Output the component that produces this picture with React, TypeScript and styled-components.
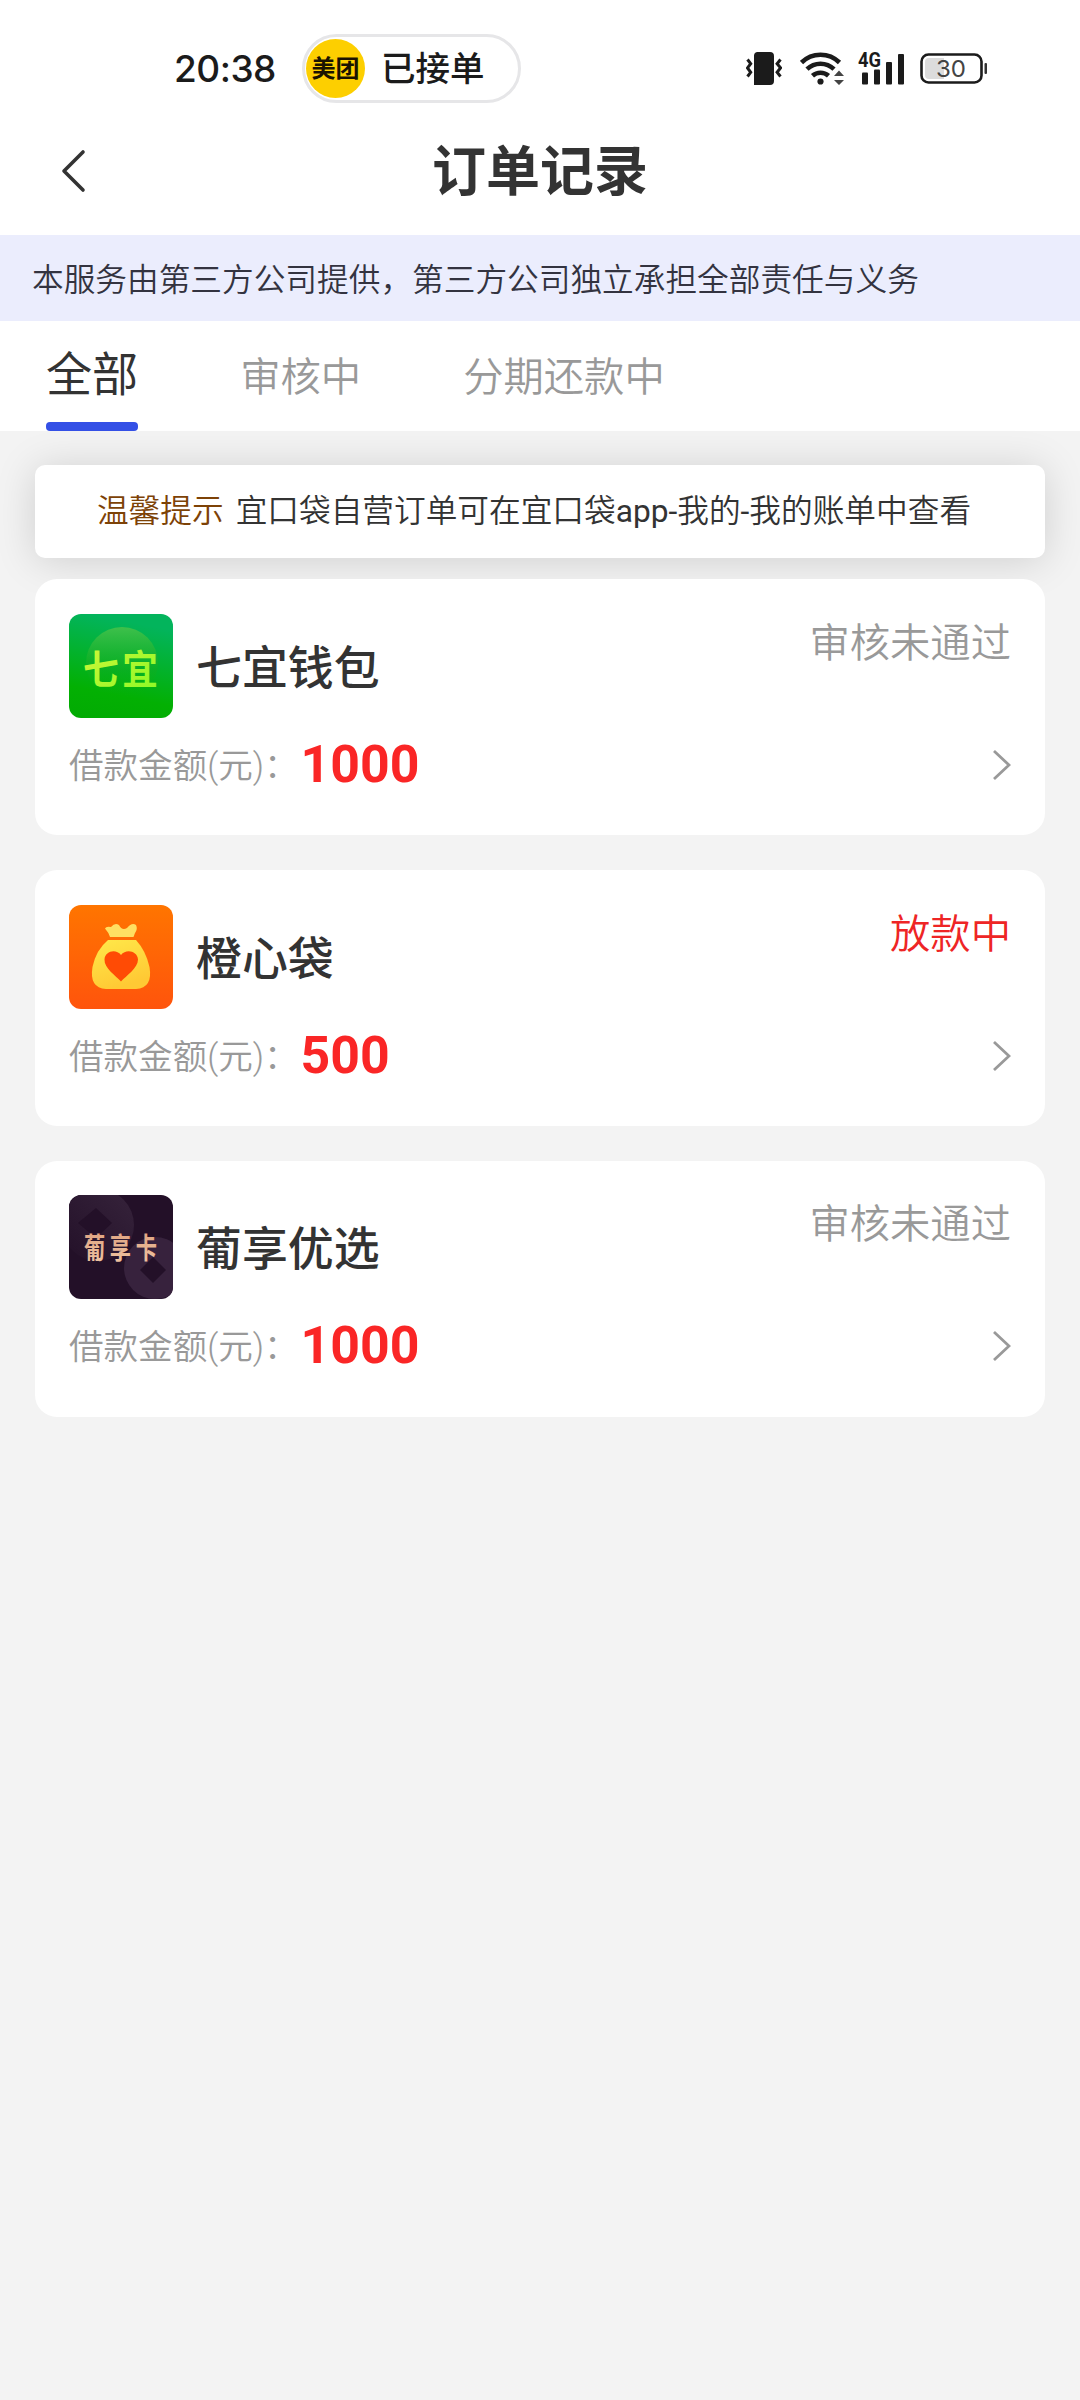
import React from "react";
import styled, { createGlobalStyle } from "styled-components";

const GlobalStyle = createGlobalStyle`
  * { box-sizing: border-box; }
  body {
    margin: 0;
    background: #f3f3f3;
    font-family: Roboto, "Noto Sans CJK SC", sans-serif;
    font-weight: 350;
    color: #333;
  }
`;

const Page = styled.div`
  width: 1080px;
  min-height: 2400px;
  background: #f3f3f3;
  white-space: nowrap;
`;

const StatusBar = styled.div`
  display: flex;
  align-items: center;
  justify-content: space-between;
  height: 137px;
  padding: 0 92px 0 174px;
  background: #fff;
`;

const StatusGroup = styled.div`
  display: flex;
  align-items: center;
`;

const Clock = styled.span`
  width: 128px;
  font: 500 37px/44px Inter, sans-serif;
  letter-spacing: -0.5px;
  color: #1b1b1b;
`;

const Pill = styled.div`
  display: flex;
  align-items: center;
  gap: 16px;
  width: 219px;
  height: 69px;
  padding-left: 1px;
  border: 3px solid #e6e6e8;
  border-radius: 35px;
  background: #fff;
`;

const PillText = styled.span`
  padding-top: 1px;
  font-size: 34.5px;
  line-height: 50px;
  font-weight: 500;
  color: #1b1b1b;
`;

const Brand = styled.span`
  display: flex;
  align-items: center;
  justify-content: center;
  width: 59px;
  height: 59px;
  padding-bottom: 4px;
  border-radius: 50%;
  background: #fdcf00;
  font-size: 24px;
  font-weight: 700;
  color: #1a1300;
`;

const TitleBar = styled.header`
  display: grid;
  grid-template-columns: 200px 1fr 200px;
  align-items: center;
  height: 98px;
  padding-bottom: 30px;
  background: #fff;
`;

const BackButton = styled.button`
  display: flex;
  padding: 0 0 1px 58px;
  border: 0;
  background: none;
`;

const Title = styled.h1`
  margin: 0;
  padding-top: 4px;
  font-size: 54px;
  line-height: 64px;
  font-weight: 700;
  text-align: center;
`;

const Banner = styled.div`
  height: 86px;
  padding-left: 32px;
  background: #ebedfd;
  font-size: 31.68px;
  line-height: 91px;
  color: #333340;
`;

const Tabs = styled.nav`
  display: flex;
  gap: 102px;
  height: 110px;
  padding-left: 46px;
  background: #fff;
`;

const Tab = styled.div<{ $active?: boolean }>`
  display: flex;
  flex-direction: column;
  justify-content: space-between;
  height: 110px;
  font-size: ${(p) => (p.$active ? 46.08 : 40.32)}px;
  line-height: ${(p) => (p.$active ? 109 : 113)}px;
  font-weight: ${(p) => (p.$active ? 400 : 350)};
  color: ${(p) => (p.$active ? "#333" : "#999")};
`;

const TabLine = styled.span`
  flex: none;
  height: 9px;
  border-radius: 4px;
  background: #3450e6;
`;

const TabLabel = styled.span`
  height: 101px;
`;

const Notice = styled.div`
  display: flex;
  justify-content: center;
  gap: 12px;
  height: 93px;
  margin: 34px 35px 21px;
  padding-right: 12px;
  border-radius: 10px;
  background: #fff;
  box-shadow: 0 3px 40px rgba(0, 0, 0, 0.15);
  font-size: 31.68px;
  line-height: 93px;
`;

const NoticeTag = styled.span`
  color: #7d4206;
`;

const Latin = styled.span`
  font-weight: 400;
`;

const List = styled.main`
  display: flex;
  flex-direction: column;
  gap: 34.75px;
  padding: 0 35px;
`;

const Card = styled.article`
  height: 256px;
  padding: 34.9px 34px 0;
  border-radius: 22px;
  background: #fff;
`;

const CardHead = styled.div`
  display: flex;
  height: 104px;
`;

const Logo = styled.svg`
  flex: none;
  width: 104px;
  height: 104px;
  border-radius: 12px;
`;

const Name = styled.h2`
  flex: 1;
  margin: 0 0 0 23px;
  font-size: 45.9px;
  line-height: 108px;
  font-weight: 500;
`;

const Status = styled.span<{ $hot?: boolean }>`
  font-size: 40.32px;
  line-height: 59px;
  color: ${(p) => (p.$hot ? "#ee2525" : "#999")};
`;

const CardFoot = styled.div`
  display: flex;
  align-items: center;
  height: 94px;
  line-height: 50px;
  color: #999;
`;

const Label = styled.span`
  padding-top: 2px;
  font-size: 34.56px;
`;

const Amount = styled.strong`
  flex: 1;
  margin-left: 2px;
  font-size: 51.84px;
  font-weight: 700;
  color: #fa2626;
`;

const StatusIcons = styled(StatusGroup)`
  gap: 13px;

  > :first-child {
    margin-right: 5px;
  }
  > :last-child {
    margin-left: 2px;
  }
`;

const VibrateIcon = () => (
  <svg width="36" height="34" viewBox="0 0 36 34">
    <path d="M11 0h13a4 4 0 0 1 4 4v25a4 4 0 0 1-4 4H8V4a4 4 0 0 1 3-4z" fill="#1b1b1b" />
    <path d="M1.500 7.500l3.200 4.200-3.200 4.200 3.200 4.400-3.200 4.200M34.500 7.500l-3.400 4.200 3.400 4.200-3.400 4.400 3.400 4.200" fill="none" stroke="#1b1b1b" strokeWidth="3" />
  </svg>
);

const WifiIcon = () => (
  <svg width="45" height="34" viewBox="0 0 45 34">
    <g fill="none" stroke="#1b1b1b" strokeWidth="4.600">
      <path d="M1.500 10.500a27 27 0 0 1 38 0" />
      <path d="M7 17.200a19.500 19.500 0 0 1 27 0" />
      <path d="M12.500 23.800a12 12 0 0 1 16 0" />
    </g>
    <circle cx="20.500" cy="29.500" r="3.100" fill="#1b1b1b" />
    <path d="M34 24l5-5.500 5 5.500zM34 28h10l-5 5z" fill="#444" />
  </svg>
);

const SignalSvg = styled.svg`
  display: block;
  overflow: visible;
`;

const SignalIcon = () => (
  <SignalSvg width="47" height="50" viewBox="0 -8 47 50">
    <text x="0" y="14.500" textLength="23" lengthAdjust="spacingAndGlyphs" fontFamily="Roboto" fontWeight="700" fontSize="20.500" fill="#1b1b1b">4G</text>
    <g fill="#1b1b1b">
      <rect x="4" y="20.500" width="6" height="12" rx="1" />
      <rect x="16" y="17.500" width="6" height="15" rx="1" />
      <rect x="28" y="10" width="6" height="22.500" rx="1" />
      <rect x="40" y="2" width="6" height="30.500" rx="1" />
    </g>
  </SignalSvg>
);

const BatteryIcon = () => (
  <svg width="68" height="32" viewBox="0 0 68 32">
    <rect x="1.500" y="1.500" width="60" height="28" rx="7" fill="#fff" stroke="#1b1b1b" strokeWidth="2.600" />
    <path d="M9 5h15v21H9a4 4 0 0 1-4-4V9a4 4 0 0 1 4-4z" fill="#dcdcdc" />
    <rect x="64.500" y="10" width="2.500" height="11" rx="1" fill="#333" />
    <text x="31" y="24" textAnchor="middle" textLength="30" lengthAdjust="spacingAndGlyphs" fontFamily="Inter" fontWeight="400" fontSize="23.500" fill="#444">30</text>
  </svg>
);

const GreenLogo = () => (
  <Logo viewBox="0 0 104 104">
    <defs>
      <linearGradient id="greenBg" x1="0.2" y1="0" x2="0" y2="1">
        <stop offset="0" stopColor="#03b45c" />
        <stop offset="0.7" stopColor="#03b003" />
        <stop offset="1" stopColor="#02aa03" />
      </linearGradient>
      <linearGradient id="greenDisc" x1="0" y1="0" x2="0" y2="1">
        <stop offset="0" stopColor="#3fc04b" />
        <stop offset="0.6" stopColor="#10ae20" stopOpacity="0.5" />
        <stop offset="1" stopColor="#03b003" stopOpacity="0" />
      </linearGradient>
      <linearGradient id="limeText" x1="0" y1="0" x2="1" y2="1">
        <stop offset="0" stopColor="#d8f53a" />
        <stop offset="1" stopColor="#86fa24" />
      </linearGradient>
    </defs>
    <rect width="104" height="104" fill="url(#greenBg)" />
    <circle cx="53" cy="49" r="36" fill="url(#greenDisc)" />
    <g transform="translate(14 69.500) scale(0.870 0.960)" fontFamily="Noto Sans CJK SC" fontWeight="700" fontSize="41" fill="url(#limeText)">
      <text x="0" y="0" letterSpacing="4">七宜</text>
    </g>
  </Logo>
);

const OrangeLogo = () => (
  <Logo viewBox="0 0 104 104">
    <defs>
      <linearGradient id="orangeBg" x1="0" y1="0" x2="0" y2="1">
        <stop offset="0" stopColor="#ff7500" />
        <stop offset="1" stopColor="#ff540c" />
      </linearGradient>
      <linearGradient id="goldBag" x1="0" y1="0" x2="0.4" y2="1">
        <stop offset="0" stopColor="#ffe94a" />
        <stop offset="1" stopColor="#ffc934" />
      </linearGradient>
    </defs>
    <rect width="104" height="104" fill="url(#orangeBg)" />
    <path d="M41 32Q40 28 36 23.500Q37 21 42 22Q46 17 50 20Q53 26 58 23Q63 17 67 20Q69 24 66 28L64.500 32z" fill="#ffdf62" />
    <path d="M39 35H67Q77 46 80.500 62Q84 83 67 84H37Q20 83 23.500 62Q27 45 39 35z" fill="url(#goldBag)" />
    <path d="M52 76.500C47 71 35 63 35.500 54.500C36 46 47 43.500 52 50C57 43.500 68.500 46 69 54.500C69 63 57 71 52 76.500z" fill="#ff4b05" />
  </Logo>
);

const PurpleLogo = () => (
  <Logo viewBox="0 0 104 104">
    <defs>
      <linearGradient id="copper" x1="0" y1="0" x2="0" y2="1">
        <stop offset="0" stopColor="#dd9f7c" />
        <stop offset="1" stopColor="#f0c6a4" />
      </linearGradient>
      <linearGradient id="coinTop" x1="0" y1="1" x2="1" y2="0">
        <stop offset="0" stopColor="#231028" />
        <stop offset="1" stopColor="#36233b" />
      </linearGradient>
    </defs>
    <rect width="104" height="104" fill="#231028" />
    <circle cx="29" cy="30" r="36" fill="url(#coinTop)" />
    <path d="M27 13l16 15-16 15L9 28z" fill="#231028" />
    <circle cx="86" cy="73" r="31" fill="#37223d" />
    <path d="M84 62l13 13-13 13-13-13z" fill="#231028" />
    <g transform="translate(15 63.500) scale(0.850 1.160)" fontFamily="Noto Sans CJK SC" fontWeight="700" fontSize="25" fill="url(#copper)">
      <text x="0" y="0" letterSpacing="5.400">葡享卡</text>
    </g>
  </Logo>
);

const Arrow = () => (
  <svg width="20" height="32" viewBox="0 0 20 32">
    <path d="M3 2l15 14L3 30" fill="none" stroke="#999" strokeWidth="2.800" />
  </svg>
);

const orders = [
  { name: "七宜钱包", amount: "1000", status: "审核未通过", hot: false, logo: <GreenLogo /> },
  { name: "橙心袋", amount: "500", status: "放款中", hot: true, logo: <OrangeLogo /> },
  { name: "葡享优选", amount: "1000", status: "审核未通过", hot: false, logo: <PurpleLogo /> },
];

export default function App() {
  return (
    <Page>
      <GlobalStyle />
      <StatusBar>
        <StatusGroup>
          <Clock>20:38</Clock>
          <Pill>
            <Brand>美团</Brand>
            <PillText>已接单</PillText>
          </Pill>
        </StatusGroup>
        <StatusIcons>
          <VibrateIcon />
          <WifiIcon />
          <SignalIcon />
          <BatteryIcon />
        </StatusIcons>
      </StatusBar>
      <TitleBar>
        <BackButton aria-label="返回">
          <svg width="30" height="44" viewBox="0 0 30 44">
            <path d="M25 3L6 22l19 19" fill="none" stroke="#333" strokeWidth="3.600" strokeLinecap="round" strokeLinejoin="round" />
          </svg>
        </BackButton>
        <Title>订单记录</Title>
      </TitleBar>
      <Banner>本服务由第三方公司提供，第三方公司独立承担全部责任与义务</Banner>
      <Tabs>
        <Tab $active>
          <TabLabel>全部</TabLabel>
          <TabLine />
        </Tab>
        <Tab>
          <TabLabel>审核中</TabLabel>
        </Tab>
        <Tab>
          <TabLabel>分期还款中</TabLabel>
        </Tab>
      </Tabs>
      <Notice>
        <NoticeTag>温馨提示</NoticeTag>
        <span>
          宜口袋自营订单可在宜口袋<Latin>app-</Latin>我的<Latin>-</Latin>我的账单中查看
        </span>
      </Notice>
      <List>
        {orders.map((o) => (
          <Card key={o.name}>
            <CardHead>
              {o.logo}
              <Name>{o.name}</Name>
              <Status $hot={o.hot}>{o.status}</Status>
            </CardHead>
            <CardFoot>
              <Label>借款金额(元)：</Label>
              <Amount>{o.amount}</Amount>
              <Arrow />
            </CardFoot>
          </Card>
        ))}
      </List>
    </Page>
  );
}
